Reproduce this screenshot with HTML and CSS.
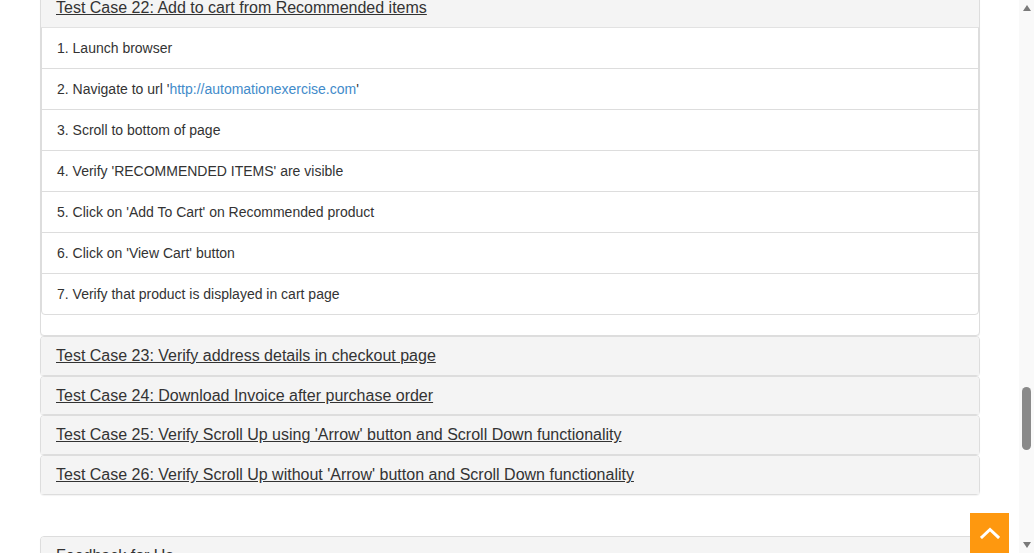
FILE: index.html
```html
<!DOCTYPE html>
<html>
<head>
<meta charset="utf-8">
<link rel="stylesheet" href="styles.css">
</head>
<body>
<div class="page">
  <main class="viewport">
    <div class="container">
      <div class="panel-group">
        <div class="panel panel-open">
          <div class="panel-heading"><h4 class="panel-title"><a href="#">Test Case 22: Add to cart from Recommended items</a></h4></div>
          <ul class="list-group">
            <li class="list-group-item">1. Launch browser</li>
            <li class="list-group-item">2. Navigate to url '<a class="link" href="#">http://automationexercise.com</a>'</li>
            <li class="list-group-item">3. Scroll to bottom of page</li>
            <li class="list-group-item">4. Verify 'RECOMMENDED ITEMS' are visible</li>
            <li class="list-group-item">5. Click on 'Add To Cart' on Recommended product</li>
            <li class="list-group-item">6. Click on 'View Cart' button</li>
            <li class="list-group-item">7. Verify that product is displayed in cart page</li>
          </ul>
        </div>
        <div class="panel">
          <div class="panel-heading"><h4 class="panel-title"><a href="#">Test Case 23: Verify address details in checkout page</a></h4></div>
        </div>
        <div class="panel">
          <div class="panel-heading"><h4 class="panel-title"><a href="#">Test Case 24: Download Invoice after purchase order</a></h4></div>
        </div>
        <div class="panel">
          <div class="panel-heading"><h4 class="panel-title"><a href="#">Test Case 25: Verify Scroll Up using 'Arrow' button and Scroll Down functionality</a></h4></div>
        </div>
        <div class="panel">
          <div class="panel-heading"><h4 class="panel-title"><a href="#">Test Case 26: Verify Scroll Up without 'Arrow' button and Scroll Down functionality</a></h4></div>
        </div>
      </div>
      <div class="panel feedback">
        <div class="panel-heading"><h4 class="panel-title plain">Feedback for Us</h4></div>
      </div>
    </div>
    <a class="scroll-up" href="#" aria-label="Scroll up">
      <svg width="20" height="12" viewBox="0 0 20 12"><path d="M2 10 L10 2.5 L18 10" fill="none" stroke="#fff" stroke-width="3" stroke-linecap="square"/></svg>
    </a>
  </main>
  <aside class="scrollbar">
    <span class="arrow-up"></span>
    <span class="thumb"></span>
    <span class="arrow-down"></span>
  </aside>
</div>
</body>
</html>
```
FILE: styles.css
```css
html, body {
  margin: 0;
  padding: 0;
  height: 553px;
  overflow: hidden;
  background: #fff;
  font-family: "Liberation Sans", Arial, sans-serif;
  color: #333;
}

.page {
  display: flex;
  height: 553px;
}

.viewport {
  flex: 1;
  position: relative;
  overflow: hidden;
}

.container {
  width: 940px;
  margin: -12px auto 0 40px;
}

.panel-group {
  margin-bottom: 41px;
}

.panel {
  border: 1px solid #ddd;
  border-radius: 4px;
  background: #fff;
  box-shadow: 0 1px 1px rgba(0,0,0,0.05);
}

.panel-heading {
  background: #f4f4f4;
  padding: 10px 15px;
  border-radius: 3px 3px 0 0;
}

.panel-title {
  margin: 0;
  font-size: 16px;
  font-weight: normal;
  line-height: 17.8px;
}

.panel-title a {
  color: #333;
  text-decoration: underline;
}

.panel-open .panel-heading {
  border-bottom: 1px solid #e2e2e2;
}

.list-group {
  list-style: none;
  margin: 0 0 20px 0;
  padding: 0;
}

.list-group-item {
  font-size: 14px;
  line-height: 20px;
  padding: 10px 15px;
  border: 1px solid #ddd;
  margin-bottom: -1px;
  color: #333;
}

.list-group-item:first-child {
  border-top: none;
}

.list-group-item:last-child {
  margin-bottom: 0;
  border-radius: 0 0 4px 4px;
}

.link {
  color: #428bca;
  text-decoration: none;
}

.feedback .panel-title {
  color: #333;
}

.scroll-up {
  position: absolute;
  left: 970px;
  top: 513px;
  width: 39px;
  height: 40px;
  background: #fe980f;
  display: flex;
  align-items: center;
  justify-content: center;
}

.scrollbar {
  width: 15px;
  background: #f9f9f9;
  position: relative;
  display: flex;
  flex-direction: column;
  align-items: center;
}

.arrow-up {
  margin-top: 5px;
  width: 0;
  height: 0;
  border-left: 4px solid transparent;
  border-right: 4px solid transparent;
  border-bottom: 6px solid #7a7a7a;
}

.thumb {
  margin-top: 376px;
  width: 9px;
  height: 63px;
  border-radius: 5px;
  background: #8a8a8a;
}

.arrow-down {
  margin-top: auto;
  margin-bottom: 5px;
  width: 0;
  height: 0;
  border-left: 4px solid transparent;
  border-right: 4px solid transparent;
  border-top: 6px solid #7a7a7a;
}
```
